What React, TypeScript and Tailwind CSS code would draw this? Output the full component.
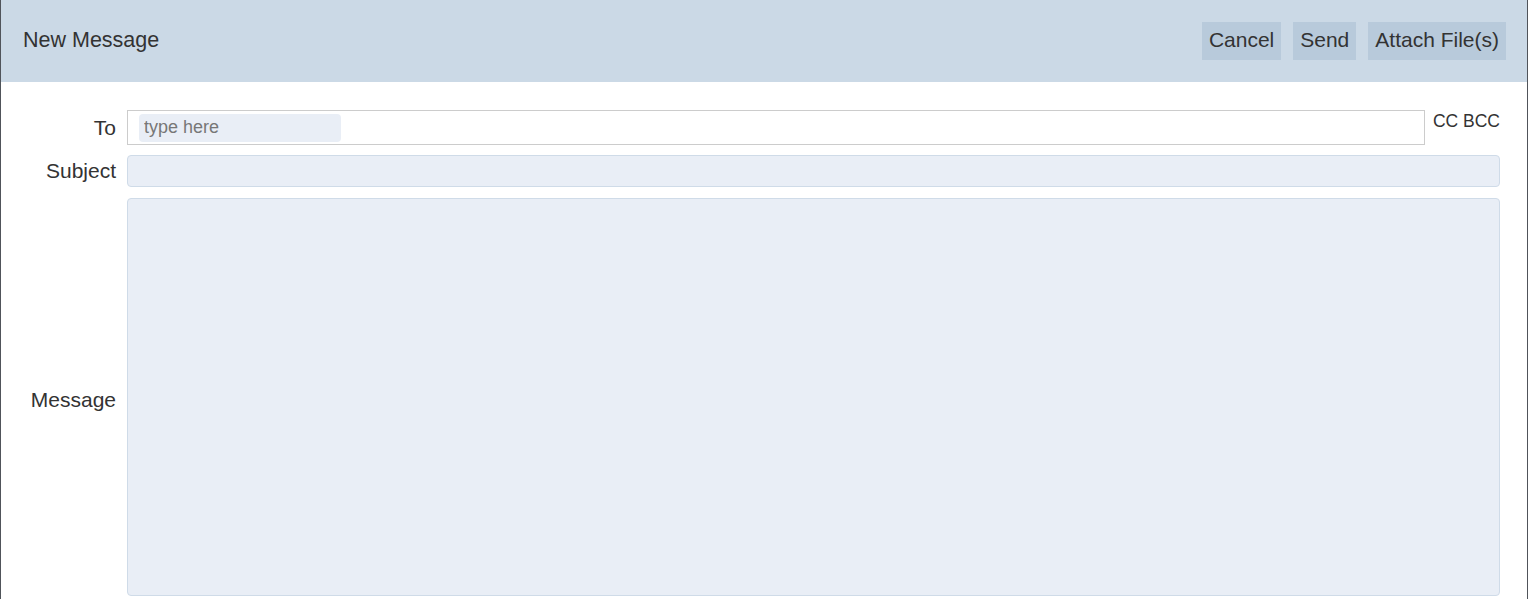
export default function App() {
  return (
    <div className="h-[599px] overflow-hidden border-x border-[#50545a] bg-white font-['Liberation_Sans',Arial,sans-serif] text-[#333]">
      <header className="flex h-[82px] items-center justify-between bg-[#cbd9e6] pl-[22px] pr-[21px]">
        <h1 className="pb-[1px] text-[21.5px] leading-none">New Message</h1>
        <div className="flex gap-[12px]">
          {["Cancel", "Send", "Attach File(s)"].map((label) => (
            <button key={label} className="h-[38px] bg-[#b8cadb] px-[7px] pb-[4px] text-[21px] leading-none text-[#333]">
              {label}
            </button>
          ))}
        </div>
      </header>
      <main className="flex flex-col pt-[28px] pr-[27px]">
        <div className="flex items-start">
          <label className="flex h-[35px] w-[115px] shrink-0 items-center justify-end pb-[1px] text-[21px] leading-none">To</label>
          <div className="ml-[11px] flex h-[35px] flex-1 items-center border border-[#cccccc] bg-white px-[11px]">
            <input
              placeholder="type here"
              className="h-[28px] w-[202px] rounded-[4px] bg-[#e9eef6] px-[5px] text-[18px] text-[#333] outline-none placeholder:text-[#777]"
            />
          </div>
          <div className="ml-[8px] pt-[1px] text-[17.5px] leading-[20px]">CC BCC</div>
        </div>
        <div className="mt-[10px] flex h-[32px] items-center">
          <label className="w-[115px] shrink-0 pb-[1px] text-right text-[21px] leading-none">Subject</label>
          <input className="ml-[11px] h-[32px] flex-1 rounded-[4px] border border-[#cfdbe8] bg-[#e9eef6] outline-none" />
        </div>
        <div className="mt-[11px] flex h-[398px] items-center">
          <label className="w-[115px] shrink-0 pt-[4px] text-right text-[21px] leading-none">Message</label>
          <textarea className="ml-[11px] h-[398px] flex-1 resize-none rounded-[4px] border border-[#cfdbe8] bg-[#e9eef6] outline-none" />
        </div>
      </main>
    </div>
  );
}
